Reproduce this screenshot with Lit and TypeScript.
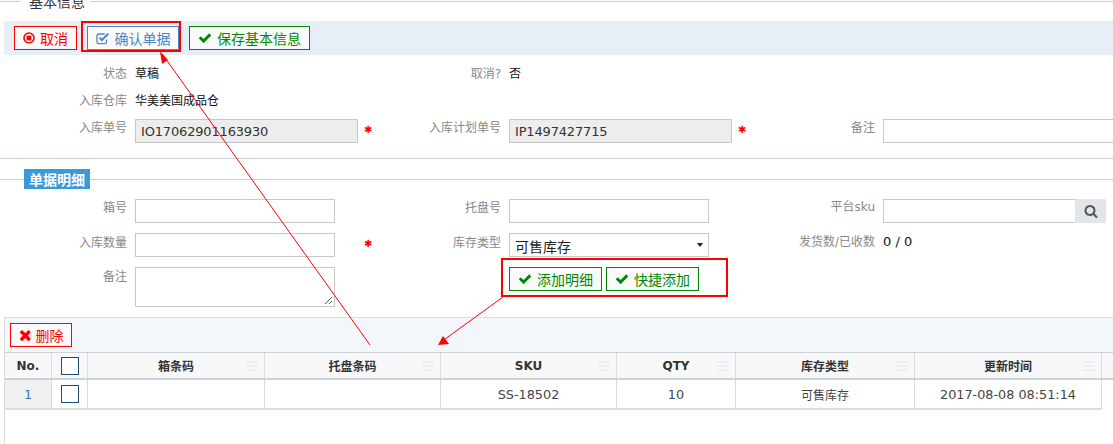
import { LitElement, html, css, svg } from "lit";
import { customElement } from "lit/decorators.js";

const CHECK = "M1671 566q0 40-28 68l-724 724-136 136q-28 28-68 28t-68-28l-136-136-362-362q-28-28-28-68t28-68l136-136q28-28 68-28t68 28l294 295 656-657q28-28 68-28t68 28l136 136q28 28 28 68z";
const TIMES = "M1298 1322q0 40-28 68l-136 136q-28 28-68 28t-68-28l-294-294-294 294q-28 28-68 28t-68-28l-136-136q-28-28-28-68t28-68l294-294-294-294q-28-28-28-68t28-68l136-136q28-28 68-28t68 28l294 294 294-294q28-28 68-28t68 28l136 136q28 28 28 68t-28 68l-294 294 294 294q28 28 28 68z";
const SEARCH = "M1216 832q0-185-131.500-316.500t-316.500-131.500-316.500 131.500-131.500 316.500 131.500 316.500 316.500 131.500 316.500-131.500 131.500-316.500zm512 832q0 52-38 90t-90 38q-54 0-90-38l-343-342q-179 124-399 124-143 0-273.500-55.500t-225-150-150-225-55.500-273.500 55.500-273.500 150-225 225-150 273.500-55.500 273.500 55.500 225 150 150 225 55.500 273.500q0 220-124 399l343 343q37 37 37 90z";

const fa = (d: string, size = 14) => html`<svg class="ic" width=${size} height=${size} viewBox="0 0 1792 1792" fill="currentColor"><path d=${d}></path></svg>`;

const STOP = html`<svg class="ic" width="12" height="12" viewBox="0 0 12 12"><circle cx="6" cy="6" r="5" fill="none" stroke="currentColor" stroke-width="1.6"></circle><rect x="3.6" y="3.6" width="4.8" height="4.8" fill="currentColor"></rect></svg>`;
const CHECKSQ = html`<svg class="ic" width="14" height="13" viewBox="0 0 14 13"><path d="M10.500 7.500v2.600a1.600 1.600 0 0 1-1.600 1.600H2.600A1.600 1.600 0 0 1 1 10.100V3.600A1.600 1.600 0 0 1 2.600 2h6.200" fill="none" stroke="currentColor" stroke-width="1.3"></path><path d="M3.600 5.600 5.900 8l6.400-6.400" fill="none" stroke="currentColor" stroke-width="2"></path></svg>`;

const COLS = ["No.", "", "箱条码", "托盘条码", "SKU", "QTY", "库存类型", "更新时间"];
const ROW = ["1", "", "", "", "SS-18502", "10", "可售库存", "2017-08-08 08:51:14"];

@customElement("app-root")
export class AppRoot extends LitElement {
  static styles = css`
    :host {
      display: block; width: 1113px; height: 444px; overflow: hidden; position: relative;
      background: #fff; color: #333;
      font: 13px "DejaVu Sans", "Noto Sans CJK SC", sans-serif;
    }
    * { box-sizing: border-box; }
    .legend { display: flex; align-items: center; height: 20px; margin-top: -9px; }
    .legend .l1 { width: 20px; height: 1px; background: #c6ced4; }
    .legend .t { padding: 0 5px 0 9px; font-size: 14px; color: #333; font-family: "Noto Sans CJK SC", sans-serif; }
    .legend .l2 { flex: 1; height: 1px; background: #c6ced4; }
    .bar { margin: 10px 0 0 4px; height: 34px; background: #e8eef6; display: flex; align-items: center; padding-left: 10px; gap: 10px; }
    .btn {
      height: 24px; display: inline-flex; align-items: center; justify-content: center; gap: 5px;
      border: 1px solid; background: #fafafa; font-size: 14px; font-family: "Noto Sans CJK SC", sans-serif;
    }
    .ic { flex: none; display: block; }
    .red { color: #f00; border-color: #f00; }
    .blue { color: #4a86c5; border-color: #4a86c5; }
    .green { color: #080; border-color: #080; }
    .grid3 { display: grid; grid-template-columns: repeat(3, 374px); }
    .cell { display: flex; gap: 8px; align-items: center; }
    .lab { width: 127px; flex: none; text-align: right; color: #888; font-size: 12px; font-family: "Noto Sans CJK SC", sans-serif; }
    .lab.en { font-family: "DejaVu Sans", "Noto Sans CJK SC", sans-serif; }
    .val { color: #111; font-size: 12px; font-family: "Noto Sans CJK SC", sans-serif; }
    .info { padding-top: 4px; }
    .info .cell { height: 27px; }
    .info .ctl-row { margin-top: 6px; }
    .info .ctl-row .cell { height: 24px; align-items: flex-start; }
    .info .ctl-row .lab, .top .lab { line-height: 16px; }
    .inp {
      height: 24px; border: 1px solid #c8c8c8; background: #fff; padding: 0 5px; display: flex; align-items: center;
      font-size: 13px; color: #333; letter-spacing: -.17px; flex: none; font-family: "DejaVu Sans", sans-serif;
    }
    .w223 { width: 223px; background: #ededed; }
    .w200 { width: 200px; }
    .wfree { width: 240px; }
    .star { color: #f00; font-size: 10px; line-height: 24px; margin-left: -2px; margin-top: -1px; width: 10px; font-family: "DejaVu Sans", sans-serif; }
    .star.far { margin-left: 21px; }
    .sep { height: 1px; margin-top: 15px; background: #c6d0d6; border-top-left-radius: 3px; }
    .legend2 { position: relative; height: 20px; margin-top: 10px; padding-left: 24px; }
    .legend2::before { content: ""; position: absolute; left: 0; right: 0; top: 10px; height: 1px; background: #c6d0d6; }
    .badge {
      position: relative; display: block; width: 66px; height: 20px; line-height: 20px; text-align: center;
      background: #3a9ad9; color: #fff; font-weight: 700; font-size: 14px; font-family: "Noto Sans CJK SC", sans-serif;
    }
    .detail { margin-top: 10px; display: flex; flex-direction: column; gap: 10px; }
    .top .cell { align-items: flex-start; }
    .top .low .lab { padding-top: 1px; }
    .ta { height: 40px; width: 200px; border: 1px solid #c8c8c8; position: relative; flex: none; }
    .grip { position: absolute; right: 1px; bottom: 1px; display: block; }
    .skuwrap { display: flex; }
    .skuwrap .inp { width: 192px; border-right: 0; }
    .sbtn { width: 31px; height: 24px; background: #e2e5ea; color: #555; display: flex; align-items: center; justify-content: center; }
    .inp.sel { width: 200px; font-size: 14px; color: #222; letter-spacing: 0; justify-content: space-between; font-family: "Noto Sans CJK SC", sans-serif; padding-top: 2px; }
    .tri { width: 0; height: 0; border-left: 3.5px solid transparent; border-right: 3.5px solid transparent; border-top: 4px solid #222; margin: -3px 0 0; }
    .nums { font-size: 13px; color: #111; line-height: 16px; padding-top: 1px; font-family: "DejaVu Sans", sans-serif; }
    .actions { display: flex; gap: 4px; }
    .actions .btn { width: 93px; }
    .table { margin: 10px 0 0 4px; border-top: 1px solid #d8dde0; border-left: 1px solid #d8dde0; height: 200px; }
    .tbar { height: 34px; background: #f3f7fb; padding: 5px 0 0 5px; }
    .tbar .btn { width: 62px; gap: 1px; }
    .thead, .trow { display: grid; grid-template-columns: 47px 36px 177px 176px 176px 119px 179px 187px 1fr; }
    .thead { height: 28px; border-top: 1px solid #ccd3d8; border-bottom: 2px solid #c8d2d8; }
    .th {
      position: relative; background: #f8f8f8; border-right: 1px solid #dcdcdc; display: flex; align-items: center; justify-content: center;
      font-weight: 700; font-size: 12px; color: #333; font-family: "DejaVu Sans", "Noto Sans CJK SC", sans-serif;
    }
    .th.last { border: 0; }
    .lines { position: absolute; right: 6px; top: 8px; width: 12px; height: 10px; border-top: 2px solid #efefef; border-bottom: 2px solid #efefef; }
    .lines::after { content: ""; position: absolute; left: 0; right: 0; top: 2px; height: 2px; background: #efefef; }
    .trow { height: 30px; }
    .td {
      border-right: 1px solid #dcdcdc; border-bottom: 2px solid #dcdfe2; display: flex; align-items: center; justify-content: center;
      font-size: 12.8px; color: #444; font-family: "DejaVu Sans", "Noto Sans CJK SC", sans-serif;
    }
    .td.cn { font-size: 12px; }
    .td.no { background: #f0f0f0; color: #3a74ae; }
    .td.end { border: 0; }
    .cb { width: 18px; height: 18px; border: 1px solid #1c4b78; background: #fff; }
    .overlay { position: absolute; left: 0; top: 0; pointer-events: none; }
  `;

  private col(label: string, body: unknown, en = false) {
    return html`<div class="cell"><span class="lab ${en ? "en" : ""}">${label}</span>${body}</div>`;
  }

  render() {
    const star = html`<span class="star">✱</span>`;
    return html`
      <div class="legend"><span class="l1"></span><span class="t">基本信息</span><span class="l2"></span></div>
      <div class="bar">
        <span class="btn red" style="width:63px">${STOP}取消</span>
        <span class="btn blue" style="width:92px">${CHECKSQ}确认单据</span>
        <span class="btn green" style="width:121px">${fa(CHECK)}保存基本信息</span>
      </div>
      <div class="info">
        <div class="grid3">
          ${this.col("状态", html`<span class="val">草稿</span>`)}
          ${this.col("取消?", html`<span class="val">否</span>`, true)}
          <div></div>
          ${this.col("入库仓库", html`<span class="val">华美美国成品仓</span>`)}
          <div></div><div></div>
        </div>
        <div class="grid3 ctl-row">
          ${this.col("入库单号", html`<div class="inp w223">IO17062901163930</div>${star}`)}
          ${this.col("入库计划单号", html`<div class="inp w223">IP1497427715</div>${star}`)}
          ${this.col("备注", html`<div class="inp wfree"></div>`)}
        </div>
      </div>
      <div class="sep"></div>
      <div class="legend2"><span class="badge">单据明细</span></div>
      <div class="detail top">
        <div class="grid3">
          ${this.col("箱号", html`<div class="inp w200"></div>`)}
          ${this.col("托盘号", html`<div class="inp w200"></div>`)}
          ${this.col("平台sku", html`<div class="skuwrap"><div class="inp"></div><div class="sbtn">${fa(SEARCH)}</div></div>`, true)}
        </div>
        <div class="grid3 low">
          ${this.col("入库数量", html`<div class="inp w200"></div><span class="star far">✱</span>`)}
          ${this.col("库存类型", html`<div class="inp sel">可售库存<span class="tri"></span></div>`)}
          ${this.col("发货数/已收数", html`<span class="nums">0 / 0</span>`, true)}
        </div>
        <div class="grid3 low">
          ${this.col("备注", html`<div class="ta"><svg class="grip" width="9" height="9" viewBox="0 0 9 9"><path d="M1 8 8 1M5 8l3-3" stroke="#555" fill="none"></path></svg></div>`)}
          <div class="cell"><span class="lab"></span><div class="actions">
            <span class="btn green">${fa(CHECK)}添加明细</span>
            <span class="btn green">${fa(CHECK)}快捷添加</span>
          </div></div>
          <div></div>
        </div>
      </div>
      <div class="table">
        <div class="tbar"><span class="btn red">${fa(TIMES, 16)}删除</span></div>
        <div class="thead">
          ${COLS.map((c, i) => html`<div class="th">${i === 1 ? html`<span class="cb"></span>` : c}${i >= 2 ? html`<span class="lines"></span>` : ""}</div>`)}
          <div class="th last"></div>
        </div>
        <div class="trow">
          ${ROW.map((c, i) => html`<div class="td ${i === 0 ? "no" : ""} ${i === 6 ? "cn" : ""}">${i === 1 ? html`<span class="cb"></span>` : c}</div>`)}
          <div class="td end"></div>
        </div>
      </div>
      <svg class="overlay" width="1113" height="444" viewBox="0 0 1113 444" fill="none">
        ${svg`
          <rect x="82" y="22" width="98" height="29" stroke="#f00" stroke-width="2"></rect>
          <rect x="502" y="259" width="225" height="37" stroke="#f00" stroke-width="2"></rect>
          <path d="M370 345 163 55" stroke="#f00"></path>
          <path d="M160 51.500 168 60 162 64z" fill="#f00"></path>
          <path d="M503 297 441 342" stroke="#f00"></path>
          <path d="M438 345 443 336 449 344z" fill="#f00"></path>
        `}
      </svg>
    `;
  }
}
